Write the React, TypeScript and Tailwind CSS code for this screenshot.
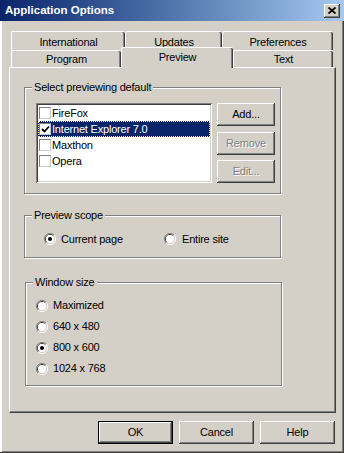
import React from 'react';

const raised =
    'bg-[#D4D0C8] shadow-[inset_-1px_-1px_0_#404040,inset_1px_1px_0_#ffffff,inset_-2px_-2px_0_#808080]';

const Button = ({ label, disabled, isDefault, className = '' }: { label: string; disabled?: boolean; isDefault?: boolean; className?: string }) => (
    <div
        className={`flex items-center justify-center ${raised} ${isDefault ? 'outline outline-1 outline-black -outline-offset-1 shadow-[inset_-2px_-2px_0_#404040,inset_2px_2px_0_#ffffff,inset_-3px_-3px_0_#808080]' : ''} ${
            disabled ? 'text-[#808080] [text-shadow:1px_1px_0_#ffffff]' : 'text-black'
        } ${className}`}
    >
        {label}
    </div>
);

const Radio = ({ checked }: { checked?: boolean }) => (
    <svg width="12" height="12" viewBox="0 0 12 12" className="shrink-0">
        <path d="M10 2 A5.5 5.5 0 0 0 2 10" fill="none" stroke="#808080" strokeWidth="1" />
        <path d="M9.2 2.8 A4.5 4.5 0 0 0 2.8 9.2" fill="none" stroke="#404040" strokeWidth="1" />
        <path d="M2 10 A5.5 5.5 0 0 0 10 2" fill="none" stroke="#ffffff" strokeWidth="1" />
        <path d="M2.8 9.2 A4.5 4.5 0 0 0 9.2 2.8" fill="none" stroke="#D4D0C8" strokeWidth="1" />
        <circle cx="6" cy="6" r="4" fill="#ffffff" />
        {checked && <circle cx="6" cy="6" r="2" fill="#000000" />}
    </svg>
);

const Check = ({ checked }: { checked?: boolean }) => (
    <div className="w-[12px] h-[12px] shrink-0 bg-white border border-[#808080] border-r-[#c8c8c8] border-b-[#c8c8c8] flex items-center justify-center">
        {checked && (
            <svg width="9" height="9" viewBox="0 0 9 9">
                <path d="M1 4 L3.5 6.5 L8 1.5" fill="none" stroke="#000" strokeWidth="1.8" />
            </svg>
        )}
    </div>
);

const Group = ({ title, className = '', children }: { title: string; className?: string; children: React.ReactNode }) => (
    <div className={`relative w-[257px] border border-[#808080] shadow-[inset_1px_1px_0_#ffffff,1px_1px_0_#ffffff] ${className}`}>
        <div className="absolute left-[7px] top-[-8px] px-[2px] bg-[#D4D0C8] leading-[14px]">{title}</div>
        {children}
    </div>
);

const Tab = ({ label, w, row1, selected }: { label: string; w: string; row1?: boolean; selected?: boolean }) => (
    <div
        className={`${w} flex justify-center border-l border-t border-white rounded-tl-[2px] rounded-tr-[2px] bg-[#D4D0C8] shadow-[inset_-1px_0_0_#404040,inset_-2px_0_0_#808080] ${
            selected ? 'h-[21px] -mb-[1px] relative z-10 pt-[4px]' : row1 ? 'h-[19px] pt-[5px]' : 'h-[17px] pt-[3px]'
        }`}
    >
        {label}
    </div>
);

const browsers = [
    { name: 'FireFox', checked: false },
    { name: 'Internet Explorer 7.0', checked: true, selected: true },
    { name: 'Maxthon', checked: false },
    { name: 'Opera', checked: false },
];

const sizes = ['Maximized', '640 x 480', '800 x 600', '1024 x 768'];

export default function App() {
    return (
        <div className="w-[344px] h-[453px] bg-[#D4D0C8] flex flex-col font-['Liberation_Sans',Arial,sans-serif] text-[11px] tracking-[-0.2px] text-black leading-none shadow-[inset_-1px_-1px_0_#404040,inset_2px_0_0_#ffffff,inset_-2px_-2px_0_#808080] select-none">
            {/* title bar */}
            <div className="h-[21px] shrink-0 flex items-center justify-between bg-gradient-to-r from-[#0A246A] to-[#A6CAF0] pl-[5px] pr-[4px]">
                <span className="text-white font-bold text-[11.5px] tracking-normal pt-[1px]">Application Options</span>
                <div className={`w-[16px] h-[14px] flex items-center justify-center ${raised}`}>
                    <svg width="8" height="7" viewBox="0 0 8 7">
                        <path d="M0.5 0.5 L7.5 6.5 M7.5 0.5 L0.5 6.5" stroke="#000" strokeWidth="1.7" />
                    </svg>
                </div>
            </div>

            {/* tabs */}
            <div className="mt-[10px] pl-[11px] flex flex-col">
                <div className="flex">
                    <Tab label="International" w="w-[114px]" row1 />
                    <Tab label="Updates" w="w-[97px]" row1 />
                    <Tab label="Preferences" w="w-[111px]" row1 />
                </div>
                <div className="flex items-end h-[17px]">
                    <Tab label="Program" w="w-[110px]" />
                    <Tab label="Preview" w="w-[112px]" selected />
                    <Tab label="Text" w="w-[100px]" />
                </div>
            </div>

            {/* tab panel */}
            <div className="ml-[9px] w-[327px] h-[346px] shrink-0 border-l border-t border-white border-r border-b border-r-[#404040] border-b-[#404040] shadow-[inset_-1px_-1px_0_#808080] pl-[14px] pt-[19px] flex flex-col">
                <Group title="Select previewing default" className="h-[107px]">
                    <div className="flex pt-[15px] pl-[11px] gap-[5px]">
                        <div className="w-[176px] h-[80px] bg-white p-[2px] shadow-[inset_1px_1px_0_#808080,inset_-1px_-1px_0_#ffffff,inset_2px_2px_0_#404040,inset_-2px_-2px_0_#D4D0C8]">
                            {browsers.map((b) => (
                                <div
                                    key={b.name}
                                    className={`h-[16px] flex items-center pl-[1px] gap-[1px] ${
                                        b.selected ? 'bg-[#0A246A] text-white outline outline-1 outline-dotted outline-[#FFFF80] -outline-offset-1' : ''
                                    }`}
                                >
                                    <Check checked={b.checked} />
                                    <span>{b.name}</span>
                                </div>
                            ))}
                        </div>
                        <div className="flex flex-col w-[58px]">
                            <Button label="Add..." className="h-[23px]" />
                            <Button label="Remove" disabled className="h-[23px] mt-[6px]" />
                            <Button label="Edit..." disabled className="h-[23px] mt-[5px]" />
                        </div>
                    </div>
                </Group>

                <Group title="Preview scope" className="h-[43px] mt-[21px]">
                    <div className="flex items-center pt-[17px] pl-[19px]">
                        <div className="flex items-center gap-[5px] w-[120px]">
                            <Radio checked />
                            <span>Current page</span>
                        </div>
                        <div className="flex items-center gap-[6px]">
                            <Radio />
                            <span>Entire site</span>
                        </div>
                    </div>
                </Group>

                <Group title="Window size" className="h-[104px] mt-[24px] ml-[1px]">
                    <div className="flex flex-col pt-[12px] pl-[10px]">
                        {sizes.map((s, i) => (
                            <div key={s} className="h-[21px] flex items-center gap-[5px]">
                                <Radio checked={i === 2} />
                                <span>{s}</span>
                            </div>
                        ))}
                    </div>
                </Group>
            </div>

            {/* dialog buttons */}
            <div className="flex justify-end gap-[6px] pr-[9px] mt-[8px]">
                <Button label="OK" isDefault className="w-[75px] h-[23px]" />
                <Button label="Cancel" className="w-[75px] h-[23px]" />
                <Button label="Help" className="w-[75px] h-[23px]" />
            </div>
        </div>
    );
}
